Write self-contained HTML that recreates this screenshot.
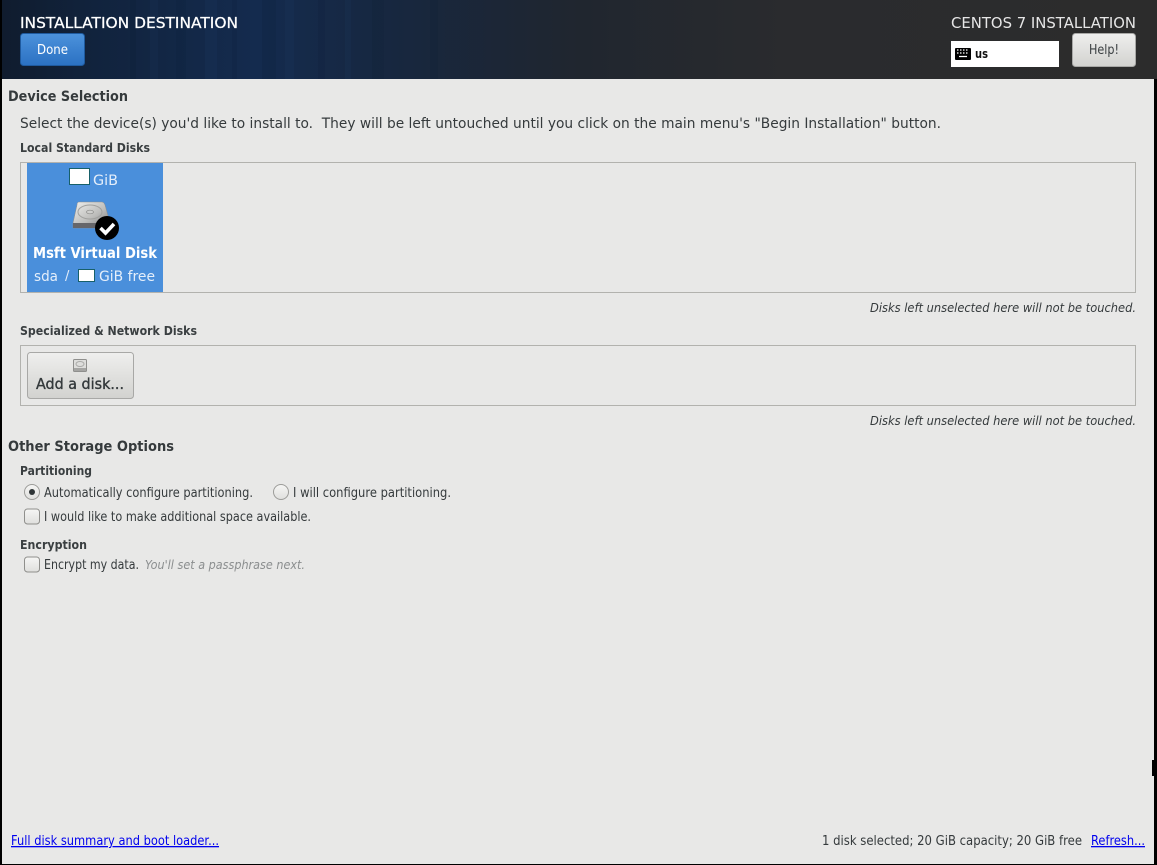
<!DOCTYPE html>
<html><head><meta charset="utf-8"><title>Installation Destination</title>
<style>
html,body{margin:0;padding:0;background:#000;width:1157px;height:865px;overflow:hidden}
svg{display:block}
text{font-family:"DejaVu Sans","Liberation Sans",sans-serif;font-size:13px;fill:#353a3c;white-space:pre}
.h{font-size:14.5px;font-weight:bold;fill:#353a3c}
.b{font-size:12.5px;font-weight:bold;fill:#3a3f41}
.i{font-style:italic;font-size:12.5px}
.w{fill:#fff}
</style></head><body>
<svg width="1157" height="865" viewBox="0 0 1157 865" xmlns="http://www.w3.org/2000/svg">
<defs>
<linearGradient id="hd" x1="0" x2="1" y1="0" y2="0">
<stop offset="0" stop-color="#101c2e"/><stop offset=".08" stop-color="#11233d"/><stop offset=".22" stop-color="#142b4e"/><stop offset=".34" stop-color="#17273f"/><stop offset=".5" stop-color="#20262f"/><stop offset=".68" stop-color="#2a2b2e"/><stop offset="1" stop-color="#2c2c2c"/>
</linearGradient>
<linearGradient id="blue" x1="0" x2="0" y1="0" y2="1"><stop offset="0" stop-color="#4c92dc"/><stop offset="1" stop-color="#2b71c2"/></linearGradient>
<linearGradient id="gr" x1="0" x2="0" y1="0" y2="1"><stop offset="0" stop-color="#efefee"/><stop offset="1" stop-color="#d2d2cf"/></linearGradient>
<linearGradient id="cb" x1="0" x2="0" y1="0" y2="1"><stop offset="0" stop-color="#f6f6f5"/><stop offset="1" stop-color="#dfdfdd"/></linearGradient>
<linearGradient id="dk" x1="0" x2="1" y1="0" y2="1"><stop offset="0" stop-color="#f0f0ee"/><stop offset=".55" stop-color="#bdbdbb"/><stop offset="1" stop-color="#77777a"/></linearGradient>
</defs>
<rect width="1157" height="865" fill="#000"/>
<rect x="2" y="79" width="1152" height="785" fill="#e8e8e7"/>
<rect x="2" y="0" width="1155" height="79" fill="url(#hd)"/>
<g fill="#0b1b33" opacity=".14">
<rect x="130" y="0" width="6" height="79"/><rect x="176" y="0" width="10" height="79"/><rect x="232" y="0" width="5" height="79"/><rect x="262" y="0" width="14" height="79"/><rect x="318" y="0" width="7" height="79"/><rect x="372" y="0" width="12" height="79"/><rect x="430" y="0" width="8" height="79"/>
</g>
<g fill="#2a4f80" opacity=".09">
<rect x="150" y="0" width="8" height="79"/><rect x="205" y="0" width="12" height="79"/><rect x="285" y="0" width="9" height="79"/><rect x="345" y="0" width="6" height="79"/>
</g>
<rect x="1154" y="79" width="3" height="786" fill="#000"/>

<text x="20" y="28" class="w" style="font-size:15px;stroke:#fff;stroke-width:.25" textLength="218" lengthAdjust="spacingAndGlyphs">INSTALLATION DESTINATION</text>
<rect x="20.500" y="33.500" width="64" height="32" rx="3" fill="url(#blue)" stroke="#1f5a9e"/>
<text x="37" y="54" class="w" textLength="31" lengthAdjust="spacingAndGlyphs">Done</text>
<text x="951" y="28" style="font-size:15px;fill:#e6e6e6" textLength="185" lengthAdjust="spacingAndGlyphs">CENTOS 7 INSTALLATION</text>
<rect x="951" y="41" width="108" height="26" fill="#fff"/>
<rect x="955" y="48" width="16" height="12" rx="1" fill="#000"/>
<path d="M957 50h1.500M960 50h1.500M963 50h1.500M966 50h1.500M957 53h1.500M960 53h1.500M963 53h1.500M966 53h1.500M959 56.500h8" stroke="#fff" stroke-width="1.200" fill="none"/>
<text x="975" y="58" style="font-size:12px;font-weight:bold;fill:#111" textLength="13" lengthAdjust="spacingAndGlyphs">us</text>
<rect x="1072.500" y="33.500" width="63" height="33" rx="3" fill="url(#gr)" stroke="#a8a8a6"/>
<text x="1089" y="54" style="fill:#3a3f41" textLength="30" lengthAdjust="spacingAndGlyphs">Help!</text>

<text x="8" y="101" class="h" textLength="120" lengthAdjust="spacingAndGlyphs">Device Selection</text>
<text x="20" y="128" style="font-size:14.5px" textLength="921" lengthAdjust="spacingAndGlyphs">Select the device(s) you'd like to install to.  They will be left untouched until you click on the main menu's "Begin Installation" button.</text>
<text x="20" y="152" class="b" textLength="130" lengthAdjust="spacingAndGlyphs">Local Standard Disks</text>

<rect x="20.500" y="162.500" width="1115" height="130" fill="none" stroke="#b2b2ae"/>
<rect x="27" y="163" width="136" height="129" fill="#4a8fdb"/>
<rect x="69.500" y="168.500" width="20" height="16" fill="#fff" stroke="#17606a"/>
<text x="93" y="185" style="font-size:14px;fill:#e4eefa" textLength="25" lengthAdjust="spacingAndGlyphs">GiB</text>
<path d="M79 202h23q2 0 3 3l5 18v5H73v-5l4-18q0-3 2-3z" fill="url(#dk)" stroke="#8d8d8b" stroke-width=".5"/>
<rect x="73" y="223" width="37" height="5" fill="#66666a"/>
<ellipse cx="90" cy="212" rx="12" ry="7" fill="none" stroke="#a0a09e"/>
<ellipse cx="90" cy="212" rx="3.500" ry="1.800" fill="#cfcfcd" stroke="#8d8d8b" stroke-width=".7"/>
<circle cx="107" cy="228" r="12" fill="#000"/>
<path d="M100.500 228l5 5 8.500-9" fill="none" stroke="#fff" stroke-width="3.600"/>
<text x="33" y="258" class="w" style="font-size:15px;font-weight:bold" textLength="124" lengthAdjust="spacingAndGlyphs">Msft Virtual Disk</text>
<text x="34" y="281" style="font-size:14px;fill:#e4eefa" textLength="24" lengthAdjust="spacingAndGlyphs">sda</text>
<text x="65" y="280" style="font-size:13px;fill:#e4eefa">/</text>
<rect x="78.500" y="269.500" width="16" height="12" fill="#fff" stroke="#17606a"/>
<text x="99" y="281" style="font-size:14px;fill:#e4eefa" textLength="56" lengthAdjust="spacingAndGlyphs">GiB free</text>

<text x="870" y="312" class="i" textLength="266" lengthAdjust="spacingAndGlyphs">Disks left unselected here will not be touched.</text>
<text x="20" y="335" class="b" textLength="177" lengthAdjust="spacingAndGlyphs">Specialized &amp; Network Disks</text>

<rect x="20.500" y="345.500" width="1115" height="60" fill="none" stroke="#b2b2ae"/>
<rect x="27.500" y="352.500" width="106" height="46" rx="3" fill="url(#gr)" stroke="#a8a8a6"/>
<rect x="73.500" y="359.500" width="13" height="12" rx="1" fill="#dededc" stroke="#8f8f8d"/>
<rect x="74" y="368" width="12" height="3" fill="#a5a5a3"/>
<ellipse cx="80" cy="364" rx="4" ry="2.500" fill="none" stroke="#a9a9a7"/>
<text x="36" y="389" style="font-size:15px;stroke:#2e3436;stroke-width:.35" textLength="88" lengthAdjust="spacingAndGlyphs">Add a disk...</text>
<text x="870" y="425" class="i" textLength="266" lengthAdjust="spacingAndGlyphs">Disks left unselected here will not be touched.</text>

<text x="8" y="451" class="h" textLength="166" lengthAdjust="spacingAndGlyphs">Other Storage Options</text>
<text x="20" y="475" class="b" textLength="72" lengthAdjust="spacingAndGlyphs">Partitioning</text>

<circle cx="32" cy="492" r="7.500" fill="url(#cb)" stroke="#9c9c99"/>
<circle cx="32" cy="492" r="3" fill="#2e3436"/>
<text x="44" y="497" textLength="209" lengthAdjust="spacingAndGlyphs">Automatically configure partitioning.</text>
<circle cx="281" cy="492" r="7.500" fill="url(#cb)" stroke="#9c9c99"/>
<text x="293" y="497" textLength="158" lengthAdjust="spacingAndGlyphs">I will configure partitioning.</text>
<rect x="24.500" y="509" width="15" height="15" rx="3" fill="url(#cb)" stroke="#8f8f8c"/>
<text x="44" y="521" textLength="267" lengthAdjust="spacingAndGlyphs">I would like to make additional space available.</text>

<text x="20" y="549" class="b" textLength="67" lengthAdjust="spacingAndGlyphs">Encryption</text>
<rect x="24.500" y="557" width="15" height="15" rx="3" fill="url(#cb)" stroke="#8f8f8c"/>
<text x="44" y="569" textLength="95" lengthAdjust="spacingAndGlyphs">Encrypt my data.</text>
<text x="145" y="569" class="i" style="fill:#8b8e8f" textLength="160" lengthAdjust="spacingAndGlyphs">You'll set a passphrase next.</text>

<text x="11" y="845" style="fill:#0000ee;text-decoration:underline" textLength="208" lengthAdjust="spacingAndGlyphs">Full disk summary and boot loader...</text>
<text x="822" y="845" textLength="260" lengthAdjust="spacingAndGlyphs">1 disk selected; 20 GiB capacity; 20 GiB free</text>
<text x="1091" y="845" style="fill:#0000ee;text-decoration:underline" textLength="54" lengthAdjust="spacingAndGlyphs">Refresh...</text>

<path d="M1152 760h2v16h-2z" fill="#000"/>
</svg>
</body></html>
